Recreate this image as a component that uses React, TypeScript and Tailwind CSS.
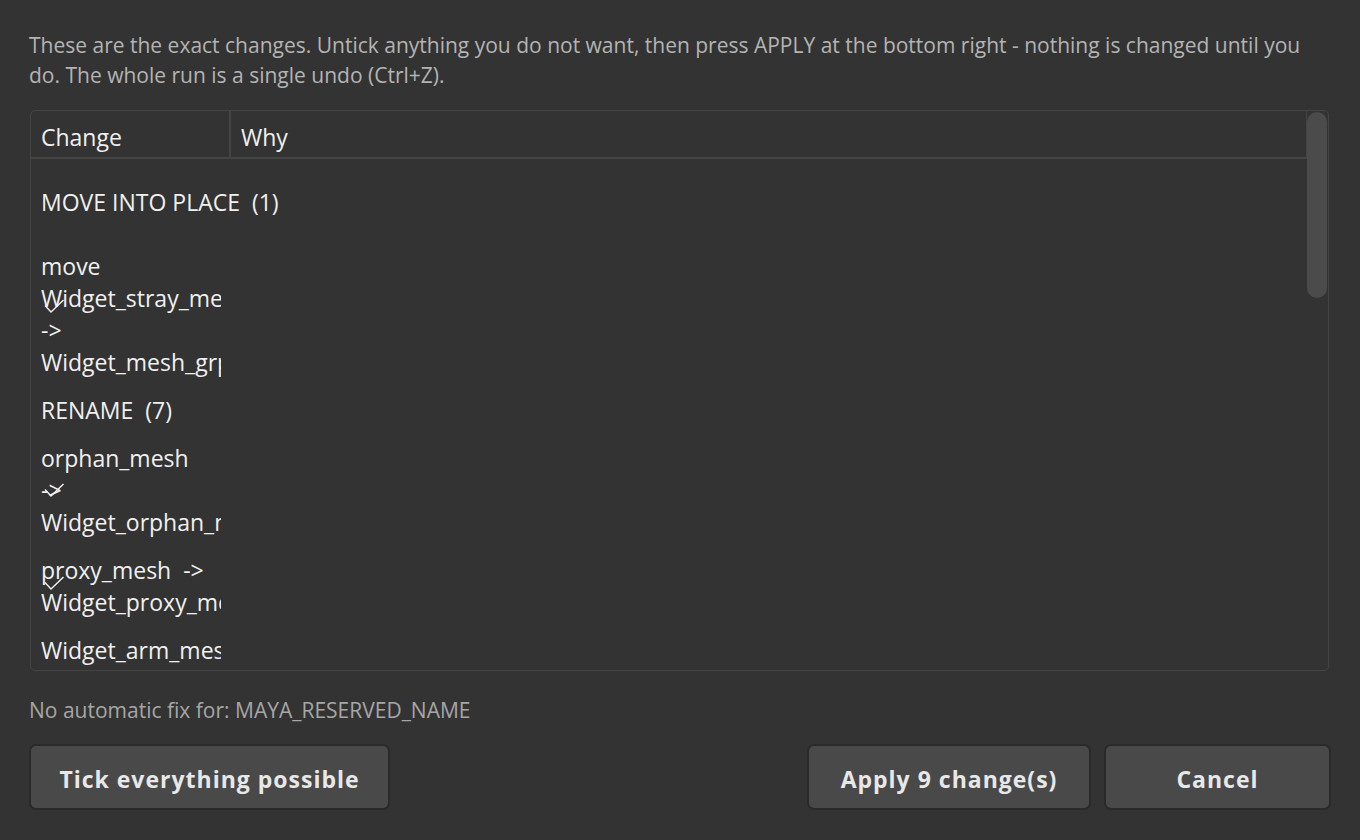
import type { ReactNode } from 'react'

const font = { fontFamily: '"Open Sans", "Noto Sans", sans-serif' }

function Check({ top }: { top: number }) {
  return (
    <svg
      width="21"
      height="15"
      viewBox="0 0 21 15"
      className="absolute left-[13px]"
      style={{ top }}
      aria-hidden="true"
    >
      <polyline points="1,6.5 7,13 19.5,1" fill="none" stroke="#f2f2f2" strokeWidth="1.4" />
    </svg>
  )
}

function Item({ lines, checkTop }: { lines: string[]; checkTop?: number }) {
  return (
    <div className="relative pl-[10px]">
      <div className="w-[180px] overflow-hidden whitespace-pre">
        {lines.map((l, i) => (
          <div key={i} className="h-[32px] leading-[32px]">
            {l}
          </div>
        ))}
      </div>
      {checkTop !== undefined && <Check top={checkTop} />}
    </div>
  )
}

function Group({ children }: { children: ReactNode }) {
  return <div className="pl-[10px] h-[32px] leading-[32px] whitespace-pre">{children}</div>
}

function Button({ children, className }: { children: ReactNode; className?: string }) {
  return (
    <button
      type="button"
      className={
        'h-[66px] pt-[4px] rounded-[7px] border-2 border-[#2a2a2a] bg-[#494949] text-[23px] font-bold tracking-[1px] text-[#e8e8e8] ' +
        (className ?? '')
      }
    >
      {children}
    </button>
  )
}

export default function App() {
  return (
    <div className="w-[1360px] h-[840px] bg-[#333333] pl-[29px] pr-[29px] pt-[30px] flex flex-col overflow-hidden" style={font}>
      <p className="m-0 text-[21px] leading-[30px] text-[#b4b4b4]">
        These are the exact changes. Untick anything you do not want, then press APPLY at the bottom right - nothing is changed until you do. The whole run is a single undo (Ctrl+Z).
      </p>

      <div className="mt-[20px] ml-px mr-[2px] h-[561px] flex rounded-[5px] border border-[#444444] overflow-hidden text-[23px] text-[#f0f0f0]">
        <div className="flex-1 flex flex-col min-w-0">
          <div className="h-[48px] flex border-b-2 border-[#444444] border-r border-r-[#444444] shrink-0">
            <div className="w-[200px] border-r-2 border-[#444444] pl-[10px] flex items-center pt-[6px]">Change</div>
            <div className="pl-[10px] flex items-center pt-[6px]">Why</div>
          </div>
          <div className="flex flex-col pt-[27px]">
            <Group>MOVE INTO PLACE  (1)</Group>
            <div className="mt-[32px]">
              <Item lines={['move', 'Widget_stray_mesh', '->', 'Widget_mesh_grp']} checkTop={49} />
            </div>
            <div className="mt-[16px]">
              <Group>RENAME  (7)</Group>
            </div>
            <div className="mt-[16px]">
              <Item lines={['orphan_mesh', '->', 'Widget_orphan_mesh']} checkTop={41} />
            </div>
            <div className="mt-[16px]">
              <Item lines={['proxy_mesh  ->', 'Widget_proxy_mesh']} checkTop={22} />
            </div>
            <div className="mt-[16px]">
              <Item lines={['Widget_arm_mesh', 'Widget_arm_mesh_geo']} />
            </div>
          </div>
        </div>
        <div className="w-[21px] shrink-0 pt-px pr-px">
          <div className="h-[186px] w-[20px] rounded-[10px] bg-[#4b4b4b]" />
        </div>
      </div>

      <div className="mt-[25px] text-[21px] leading-[28px] text-[#a6a6a6]">No automatic fix for: MAYA_RESERVED_NAME</div>

      <div className="mt-[20px] flex items-center">
        <Button className="w-[361px]">Tick everything possible</Button>
        <div className="flex-1" />
        <Button className="w-[284px]">Apply 9 change(s)</Button>
        <Button className="ml-[13px] w-[227px]">Cancel</Button>
      </div>
    </div>
  )
}
